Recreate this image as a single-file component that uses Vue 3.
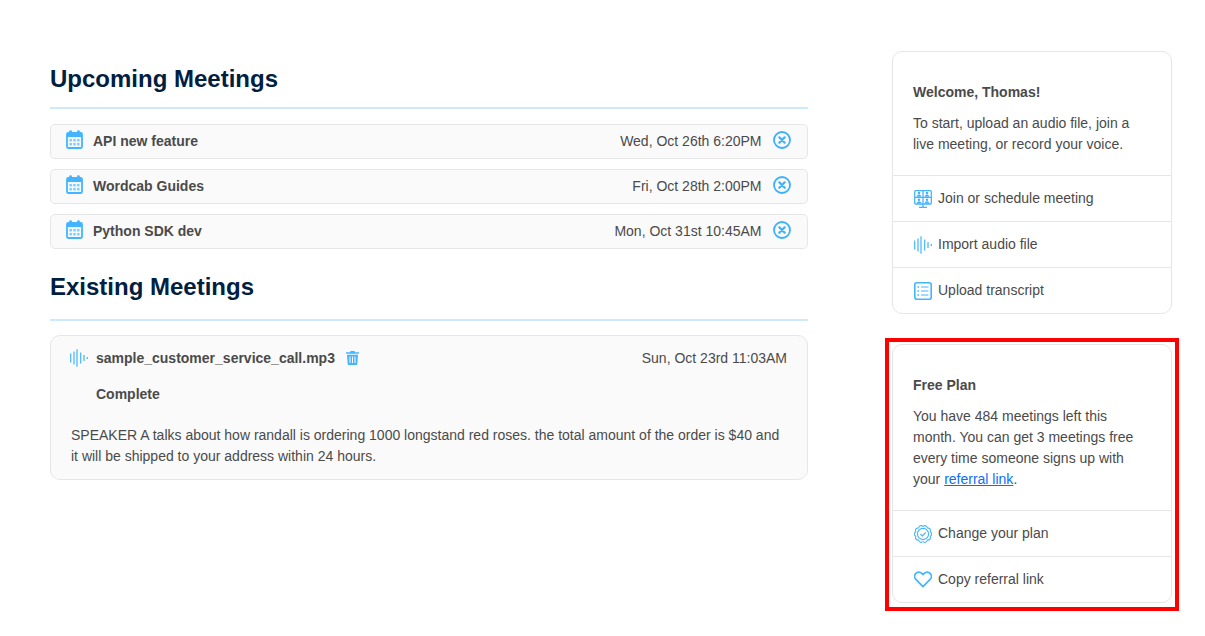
<script setup>
const upcoming = [
  { title: 'API new feature', when: 'Wed, Oct 26th 6:20PM' },
  { title: 'Wordcab Guides', when: 'Fri, Oct 28th 2:00PM' },
  { title: 'Python SDK dev', when: 'Mon, Oct 31st 10:45AM' },
]

// Scalloped outline of the plan badge
const bumps = 10
let scallop = ''
for (let i = 0; i < bumps; i++) {
  const a0 = (i / bumps) * Math.PI * 2
  const a1 = ((i + 0.5) / bumps) * Math.PI * 2
  const a2 = ((i + 1) / bumps) * Math.PI * 2
  const p = (a, r) => `${(9 + r * Math.sin(a)).toFixed(2)} ${(9 - r * Math.cos(a)).toFixed(2)}`
  if (i === 0) scallop += `M${p(a0, 7.6)}`
  scallop += `Q${p(a1, 10.1)} ${p(a2, 7.6)}`
}
scallop += 'Z'
</script>

<template>
  <div class="page">
    <main class="main">
      <h1 class="heading first">Upcoming Meetings</h1>
      <hr class="rule" />
      <div class="rows">
        <div v-for="m in upcoming" :key="m.title" class="row">
          <svg class="cal" width="17" height="19" viewBox="0 0 17 19">
            <rect x="1" y="3" width="15" height="15" rx="1.2" fill="#f3faff" stroke="#45b4ff" stroke-width="1.8" />
            <rect x="1" y="3" width="15" height="4" fill="#45b4ff" />
            <rect x="3.300" y="0.300" width="2.600" height="4" rx="1" fill="#45b4ff" />
            <rect x="11.100" y="0.300" width="2.600" height="4" rx="1" fill="#45b4ff" />
            <g fill="#7ccbff">
              <rect x="3.500" y="9" width="2.400" height="2.400" /><rect x="7.300" y="9" width="2.400" height="2.400" /><rect x="11.100" y="9" width="2.400" height="2.400" />
              <rect x="3.500" y="13" width="2.400" height="2.400" /><rect x="7.300" y="13" width="2.400" height="2.400" /><rect x="11.100" y="13" width="2.400" height="2.400" />
            </g>
          </svg>
          <span class="row-title">{{ m.title }}</span>
          <span class="row-when">{{ m.when }}</span>
          <svg class="close" width="18" height="18" viewBox="0 0 18 18" fill="none" stroke="#3cb0fd">
            <circle cx="9" cy="9" r="8" stroke-width="1.800" />
            <path d="M6.300 6.300l5.400 5.400M11.700 6.300l-5.400 5.400" stroke-width="2.200" stroke-linecap="round" />
          </svg>
        </div>
      </div>

      <h1 class="heading second">Existing Meetings</h1>
      <hr class="rule" />
      <section class="meeting">
        <div class="meeting-top">
          <svg class="wave" width="18" height="18" viewBox="0 0 18 18" stroke="#45b4ff" stroke-width="1.200" fill="none">
            <path d="M.7 4.500v9M4 2.500v13M7 .2v17.600M10.700 3.500v11M14 6v6M17.300 8v2" />
          </svg>
          <span class="file">sample_customer_service_call.mp3</span>
          <svg class="trash" width="13" height="14" viewBox="0 0 13 14" fill="#45b4ff">
            <path d="M4.500 0h4l.5 1.200H13v1.600H0V1.200h4zM1 3.800h11l-.7 9.200a1 1 0 0 1-1 1H2.700a1 1 0 0 1-1-1z" />
            <path d="M4 5.500v6.500M6.500 5.500v6.500M9 5.500v6.500" stroke="#fff" stroke-width="1" fill="none" />
          </svg>
          <span class="meeting-when">Sun, Oct 23rd 11:03AM</span>
        </div>
        <div class="status">Complete</div>
        <p class="summary">SPEAKER A talks about how randall is ordering 1000 longstand red roses. the total amount of the order is $40 and it will be shipped to your address within 24 hours.</p>
      </section>
    </main>

    <aside class="side">
      <section class="card">
        <div class="card-body">
          <div class="card-title">Welcome, Thomas!</div>
          <p class="card-text">To start, upload an audio file, join a live meeting, or record your voice.</p>
        </div>
        <div class="action">
          <svg width="18" height="18" viewBox="0 0 18 18" fill="none" stroke="#45b4ff" stroke-width="1.300">
            <rect x=".7" y=".7" width="16.600" height="13.300" rx="1" />
            <path d="M9 .7V14M.7 7.300h16.600M9 14v3.300M5 17.300h8" />
            <g fill="#45b4ff" stroke="none">
              <circle cx="5" cy="3.100" r="1.300" /><circle cx="13" cy="3.100" r="1.300" /><circle cx="5" cy="9.700" r="1.300" /><circle cx="13" cy="9.700" r="1.300" />
              <path d="M2.800 6.800c0-3 4.400-3 4.400 0zM10.800 6.800c0-3 4.400-3 4.400 0zM2.800 13.400c0-3 4.400-3 4.400 0zM10.800 13.400c0-3 4.400-3 4.400 0z" />
            </g>
          </svg>
          <span>Join or schedule meeting</span>
        </div>
        <div class="action">
          <svg width="18" height="18" viewBox="0 0 18 18" stroke="#45b4ff" stroke-width="1.200" fill="none">
            <path d="M.7 4.500v9M4 2.500v13M7 .2v17.600M10.700 3.500v11M14 6v6M17.300 8v2" />
          </svg>
          <span>Import audio file</span>
        </div>
        <div class="action">
          <svg width="18" height="18" viewBox="0 0 18 18" fill="none" stroke="#45b4ff">
            <rect x=".8" y=".8" width="16.400" height="16.400" rx="2" stroke-width="1.600" />
            <path d="M7 5h7.500M7 9h7.500M7 13h7.500" stroke-width="1" />
            <path d="M3.500 5H5M3.500 9H5M3.500 13H5" stroke-width="1.500" />
          </svg>
          <span>Upload transcript</span>
        </div>
      </section>

      <section class="card plan">
        <div class="card-body">
          <div class="card-title">Free Plan</div>
          <p class="card-text">You have 484 meetings left this month. You can get 3 meetings free every time someone signs up with your <a class="link" href="#">referral link</a>.</p>
        </div>
        <div class="action">
          <svg width="18" height="18" viewBox="0 0 18 18" fill="none" stroke="#45b4ff" stroke-width="1.100">
            <path :d="scallop" />
            <circle cx="9" cy="9" r="5.600" />
            <path d="M6.400 9l2 2 3.300-3.500" />
          </svg>
          <span>Change your plan</span>
        </div>
        <div class="action">
          <svg class="heart" width="18" height="18" viewBox="0 0 18 18" fill="none" stroke="#45b4ff" stroke-width="1.700">
            <path d="M9 16.600L1.900 9.400a4.300 4.300 0 0 1 0-6 4.100 4.100 0 0 1 5.900 0L9 4.600l1.200-1.200a4.100 4.100 0 0 1 5.900 0 4.300 4.300 0 0 1 0 6z" stroke-linejoin="round" />
          </svg>
          <span>Copy referral link</span>
        </div>
      </section>
    </aside>
  </div>
</template>

<style>
html, body { margin: 0; background: #fff; }
</style>

<style scoped>
.page {
  display: flex;
  justify-content: space-between;
  width: 1205px;
  height: 636px;
  box-sizing: border-box;
  padding: 51px 33px 0 50px;
  font-family: "Liberation Sans", Arial, sans-serif;
  font-size: 14px;
  color: #4a4a4a;
  overflow: hidden;
}
.main { width: 758px; }
.heading {
  margin: 0;
  font-size: 24px;
  line-height: 28px;
  font-weight: 700;
  color: #00203f;
}
.heading.first { margin-top: 14px; }
.heading.second { margin-top: 24px; }
.rule {
  margin: 14px 0 15px;
  height: 2px;
  border: 0;
  background: #cce9fd;
}
.heading.second + .rule { margin: 18px 0 14px; }
.rows { display: flex; flex-direction: column; gap: 10px; }
.row {
  display: flex;
  align-items: center;
  height: 35px;
  box-sizing: border-box;
  padding: 0 16px 2px 15px;
  background: #fafafa;
  border: 1px solid #e6e6e6;
  border-radius: 5px;
}
.cal { margin-bottom: 3px; }
.close { margin-bottom: 2px; }
.row-title { margin-left: 10px; font-weight: 700; }
.row-when { margin-left: auto; margin-right: 11.500px; }
.meeting {
  box-sizing: border-box;
  height: 145px;
  padding: 12px 20px 0 20px;
  background: #fafafa;
  border: 1px solid #e6e6e6;
  border-radius: 10px;
}
.meeting-top { display: flex; align-items: center; height: 20px; }
.wave { margin-left: -1px; }
.file { margin-left: 8px; font-weight: 700; }
.trash { margin-left: 11px; }
.meeting-when { margin-left: auto; }
.status { margin: 16px 0 0 25px; font-weight: 700; line-height: 20px; }
.summary { margin: 21px 0 0; line-height: 21px; }
.side { width: 280px; display: flex; flex-direction: column; gap: 30px; }
.card {
  position: relative;
  background: #fff;
  border: 1px solid #e6e6e6;
  border-radius: 10px;
}
.plan::after {
  content: "";
  position: absolute;
  top: -7px;
  right: -8px;
  bottom: -9px;
  left: -8px;
  border: 4px solid #ff0000;
  pointer-events: none;
}
.card-body { padding: 30px 20px 20px; }
.card-title { font-weight: 700; line-height: 20px; }
.card-text { margin: 11px 0 0; line-height: 21px; }
.action {
  display: flex;
  align-items: center;
  gap: 6px;
  height: 46px;
  box-sizing: border-box;
  padding: 0 20px 2px 21px;
  border-top: 1px solid #e6e6e6;
}
.action svg { margin-top: 2px; }
.action .heart { margin-top: 0; }
.link { color: #0d6efd; }
svg { flex: none; display: block; }
</style>
